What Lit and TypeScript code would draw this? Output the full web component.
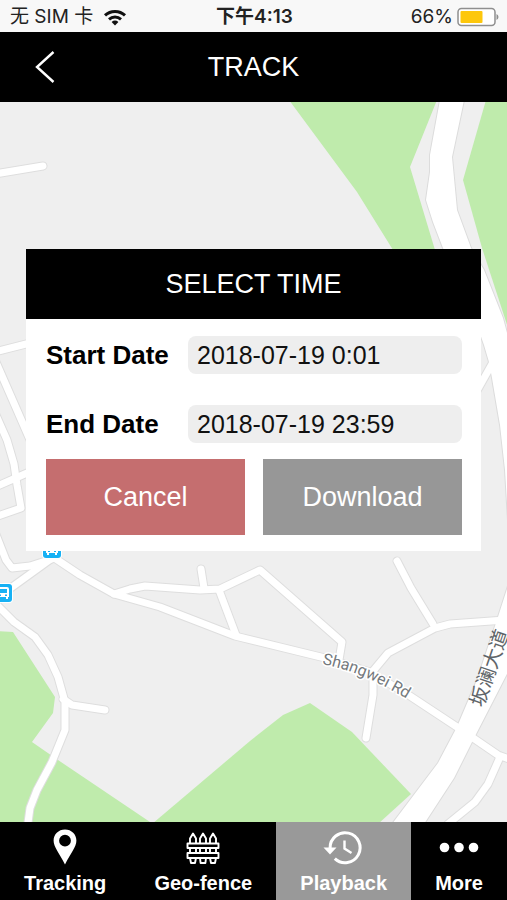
import { LitElement, html, css, svg } from "lit";
import { customElement, state } from "lit/decorators.js";
import { classMap } from "lit/directives/class-map.js";

const minorRoads = [
  "M-5 174 L43 166",
  "M-5 352 L34 342",
  "M-4 362 L34 449",
  "M-4 415 L7 440 L14 464 L17 485 L21 508 L-5 517",
  "M-5 487 L34 470",
  "M-5 532 L6 560 L12 568 L30 566 L55 558",
  "M8 590 L55 556",
  "M50 555 L80 575 L114 594 L160 607 L235 636 L325 658 L370 672 L410 696 L460 729 L498 755 L512 760",
  "M114 594 L130 589 L145 586 L200 590 L220 589 L260 570 L342 642 L339 660",
  "M201 569 L204 588",
  "M219 590 L236 635",
  "M-5 603 L14 622 L35 637 L48 655 L58 677 L65 702 L65 730 L52 762 L37 790 L30 808 L27 830",
  "M63 699 L72 705 L105 710",
  "M397 561 L411 588 L433 624",
  "M505 620 L450 624 L435 628 L388 653 L373 671 L373 695 L366 738",
  "M500 757 L488 784 L475 802 L448 824",
  "M492 364 L474 396",
];

const highway =
  "M440 100 L430 155 L430 172 L426 200 L433 222 L443 248 L468 300 L484 345 L489 362 L492 378 L500 425 L505 470 L508 520 L508 586 L497 620 L477 680 L457 727 L438 763 L392 824 L424 824 L454 778 L473 740 L512 664 L512 352 L503 318 L484 270 L471 248 L457 210 L452 157 L464 100 Z";

const parks = [
  "M289 100 L357 192 L393 250 L435 250 L410 167 L437 100 Z",
  "M486 100 L463 180 L482 248 L510 334 L510 100 Z",
  "M-2 631 L13 632 L55 697 L53 713 L32 742 L58 760 L153 824 L-2 824 Z",
  "M152 824 L250 741 L283 715 L310 703 L352 732 L411 794 L378 824 Z",
];

const busStop = (x: number, y: number) => svg`
  <g transform="translate(${x} ${y})">
    <rect x="-1" y="-1" width="20" height="20" rx="4" fill="#fff" />
    <rect width="18" height="18" rx="3" fill="#17b1f4" />
    <path d="M5 3 H13 Q15 3 15 5 V13 H14 V15 H12 V13 H6 V15 H4 V13 H3 V5 Q3 3 5 3 Z" fill="#fff" />
    <path d="M5 5 H13 V9 H5 Z M5 10.5 H7 V12 H5 Z M11 10.5 H13 V12 H11 Z" fill="#17b1f4" />
  </g>`;

@customElement("street-map")
export class StreetMap extends LitElement {
  static styles = css`
    :host { display: block; }
    .map { display: block; width: 100%; height: 100%; background: #efefef; }
    .park { fill: #bfebac; }
    .casing { fill: none; stroke: #dedede; stroke-width: 9; stroke-linecap: round; stroke-linejoin: round; }
    .road { fill: none; stroke: #fff; stroke-width: 7; stroke-linecap: round; stroke-linejoin: round; }
    .highway-casing { fill: #fff; stroke: #dcdcdc; stroke-width: 2; }
    .highway { fill: #fff; }
    .street { font: 16px Roboto, sans-serif; fill: #74797d; stroke: #fff; stroke-width: 3; paint-order: stroke; }
    .avenue { font: 20px "Noto Sans CJK SC", sans-serif; fill: #5f6569; }
  `;

  render() {
    return html`
      <svg class="map" viewBox="0 102 507 720" preserveAspectRatio="xMidYMid slice" role="img" aria-label="Map">
        ${parks.map((d) => svg`<path class="park" d=${d} />`)}
        <path class="highway-casing" d=${highway} />
        ${minorRoads.map((d) => svg`<path class="casing" d=${d} />`)}
        ${minorRoads.map((d) => svg`<path class="road" d=${d} />`)}
        <path class="highway" d=${highway} />
        ${busStop(-6, 584)} ${busStop(43, 540)}
        <path id="street-line" d="M322 664 Q368 673 418 706" fill="none" />
        <text class="street"><textPath href="#street-line">Shangwei Rd</textPath></text>
        <text class="avenue" transform="translate(483 708) rotate(-71)">坂澜大道</text>
      </svg>
    `;
  }
}

const icons: Record<string, unknown> = {
  Tracking: svg`
    <path fill="currentColor" fill-rule="evenodd" d="M18 0.5 C11.4 0.5 6.6 5.4 6.6 11.6 C6.6 18 12.5 24.5 18 35.5 C23.5 24.5 29.4 18 29.4 11.6 C29.4 5.4 24.6 0.5 18 0.5 Z M18 5.8 A5.9 5.9 0 1 1 18 17.6 A5.9 5.9 0 1 1 18 5.8 Z" />`,
  "Geo-fence": svg`
    <g fill="none" stroke="currentColor" stroke-width="1.9" stroke-linejoin="round">
      <path d="M5 14 V9.5 L8 4.5 L11 9.5 V14 M15 14 V9.5 L18 4.5 L21 9.5 V14 M25 14 V9.5 L28 4.5 L31 9.5 V14" />
      <path d="M2.5 14.5 H33.5 V19 H2.5 Z M2.5 24 H33.5 V29 H2.5 Z" />
      <path d="M5 19 V24 M11 19 V24 M15 19 V24 M21 19 V24 M25 19 V24 M31 19 V24" />
      <path d="M5 29 L6 34 H10 L11 29 M15 29 L15.6 34 H20.4 L21 29 M25 29 L26 34 H30 L31 29" />
    </g>`,
  Playback: svg`
    <path d="M4.6 19 A15 15 0 1 1 9.3 29.6" transform="translate(-0.5 0)" fill="none" stroke="currentColor" stroke-width="3" />
    <path d="M-2.5 18.5 H10.5 L4 25.5 Z" fill="currentColor" />
    <path d="M18.5 11.5 V19.5 L25.5 24" fill="none" stroke="currentColor" stroke-width="2.4" />`,
  More: svg`
    <g fill="currentColor"><circle cx="3.5" cy="18.5" r="4.8" /><circle cx="18" cy="18.5" r="4.8" /><circle cx="32.5" cy="18.5" r="4.8" /></g>`,
};

@customElement("app-root")
export class AppRoot extends LitElement {
  @state() private active = "Playback";
  @state() private startDate = "2018-07-19 0:01";
  @state() private endDate = "2018-07-19 23:59";

  static styles = css`
    :host {
      display: flex;
      flex-direction: column;
      min-height: 100vh;
      font-family: "Liberation Sans", Arial, sans-serif;
      color: #000;
    }
    * { box-sizing: border-box; }
    button, input { font: inherit; border: 0; margin: 0; padding: 0; }
    button { cursor: pointer; }

    .status {
      display: grid;
      grid-template-columns: 1fr auto 1fr;
      align-items: center;
      height: 32px;
      padding: 2px 8px 0 10px;
      background: #f8f8f8;
      font: 19px Inter, "Noto Sans CJK SC", sans-serif;
      line-height: 24px;
      color: #222;
    }
    .carrier { display: flex; align-items: center; gap: 10px; white-space: nowrap; }
    .clock { font-weight: 600; }
    .power { display: flex; align-items: center; justify-content: flex-end; gap: 4px; }
    .wifi { width: 24px; height: 18px; }
    .battery { width: 42px; height: 20px; }

    .bar {
      display: grid;
      grid-template-columns: 90px 1fr 90px;
      align-items: center;
      height: 70px;
      background: #000;
      color: #fff;
    }
    .back { height: 70px; background: none; color: inherit; }
    .chevron { display: block; margin: 0 auto; width: 24px; height: 36px; }
    .title { margin: 0; font-size: 27px; font-weight: 400; line-height: 32px; text-align: center; }

    .stage { flex: 1; display: grid; grid-template-columns: minmax(0, 1fr); }
    .stage > * { grid-area: 1 / 1; min-width: 0; }
    .backdrop { contain: size; overflow: hidden; }
    .dialog {
      z-index: 1;
      align-self: start;
      margin: 147px 26px 40px;
      background: #fff;
    }
    .dialog-head {
      display: grid;
      place-items: center;
      height: 70px;
      background: #000;
      color: #fff;
    }
    .form { display: grid; grid-template-columns: minmax(0, 1fr); gap: 31px; padding: 17px 19px 16px 20px; }
    .field { display: flex; align-items: center; }
    .label { flex: 0 0 142px; font-size: 26px; font-weight: 700; line-height: 38px; }
    .value {
      flex: 1;
      width: 100%;
      min-width: 0;
      height: 38px;
      padding: 0 9px;
      border-radius: 8px;
      background: #eee;
      font-size: 25px;
      color: #111;
    }
    .actions { display: grid; grid-template-columns: 1fr 1fr; gap: 18px; margin-top: -15px; }
    .action { height: 76px; font-size: 27px; color: #fff; }
    .cancel { background: #c56e6f; }
    .download { background: #979797; }

    .tabs { display: flex; height: 78px; background: #000; }
    .tab {
      flex: 1 1 auto;
      display: flex;
      flex-direction: column;
      align-items: center;
      gap: 6px;
      padding: 7px 23px 0;
      background: none;
      color: #fff;
      font-size: 20px;
      font-weight: 700;
      line-height: 24px;
      white-space: nowrap;
    }
    .tab.active { background: #999; }
    .icon { display: block; width: 36px; height: 36px; overflow: visible; }
  `;

  render() {
    return html`
      <div class="status">
        <span class="carrier">
          无 SIM 卡
          <svg class="wifi" viewBox="0 0 24 18" aria-label="Wi-Fi">
            <g fill="none" stroke="#111" stroke-width="3">
              <path d="M2 7.4 A14.5 14.5 0 0 1 22 7.4" />
              <path d="M6 11.4 A9 9 0 0 1 18 11.4" />
            </g>
            <path d="M8.6 14 A5.2 5.2 0 0 1 15.4 14 L12 17.4 Z" fill="#111" />
          </svg>
        </span>
        <span class="clock">下午4:13</span>
        <span class="power">
          66%
          <svg class="battery" viewBox="0 0 42 20" aria-label="Battery">
            <rect x="1" y="1.5" width="37" height="17" rx="3.5" fill="#fff" stroke="#8f8f8f" stroke-width="1.5" />
            <rect x="3.5" y="4" width="22" height="12" rx="1" fill="#fdc70c" />
            <path d="M39.5 7 Q41.5 8 41.5 10 Q41.5 12 39.5 13 Z" fill="#8f8f8f" />
          </svg>
        </span>
      </div>

      <header class="bar">
        <button class="back" aria-label="Back">
          <svg class="chevron" viewBox="0 0 24 36">
            <path d="M20.5 3 L4 18 L20.5 33" fill="none" stroke="#fff" stroke-width="2.4" />
          </svg>
        </button>
        <h1 class="title">TRACK</h1>
      </header>

      <main class="stage">
        <street-map class="backdrop"></street-map>
        <section class="dialog" role="dialog" aria-labelledby="dialog-title">
          <div class="dialog-head"><h2 class="title" id="dialog-title">SELECT TIME</h2></div>
          <form class="form" @submit=${(e: Event) => e.preventDefault()}>
            <div class="field">
              <label class="label" for="start">Start Date</label>
              <input class="value" id="start" type="text" .value=${this.startDate} />
            </div>
            <div class="field">
              <label class="label" for="end">End Date</label>
              <input class="value" id="end" type="text" .value=${this.endDate} />
            </div>
            <div class="actions">
              <button class="action cancel" type="button">Cancel</button>
              <button class="action download" type="submit">Download</button>
            </div>
          </form>
        </section>
      </main>

      <nav class="tabs">
        ${Object.keys(icons).map(
          (name) => html`
            <button
              class=${classMap({ tab: true, active: name === this.active })}
              @click=${() => (this.active = name)}
            >
              <svg class="icon" viewBox="0 0 36 36" aria-hidden="true">${icons[name]}</svg>
              <span>${name}</span>
            </button>
          `,
        )}
      </nav>
    `;
  }
}
